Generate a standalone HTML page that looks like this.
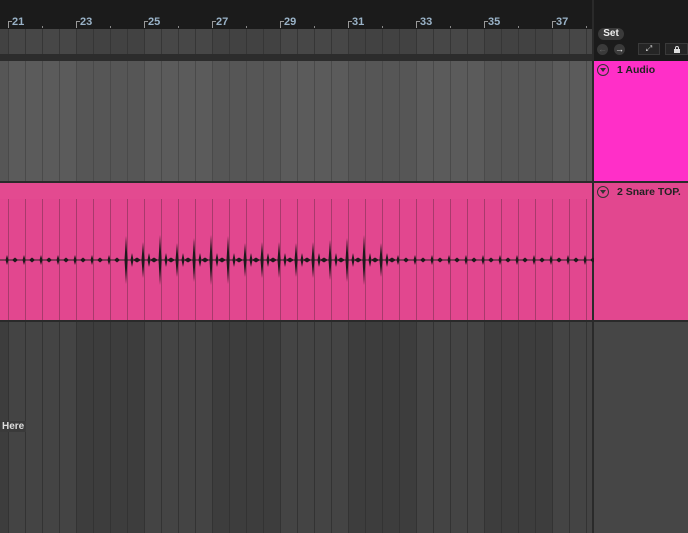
<!DOCTYPE html>
<html><head><meta charset="utf-8"><style>
*{margin:0;padding:0;box-sizing:border-box}
body{width:688px;height:533px;overflow:hidden;background:#1b1b1b;font-family:"Liberation Sans",sans-serif;position:relative}
.abs{position:absolute}
.num{position:absolute;top:16px;font-size:11px;font-weight:bold;color:#9ab3c8}
.tick{position:absolute;top:21px;width:4px;height:7px;border-left:1px solid #999;border-top:1px solid #999}
</style></head><body>
<div class="abs" style="left:0;top:0;width:592px;height:29px;background:#1b1b1b"></div>
<div id="ruler"></div>
<svg class="abs" style="left:0;top:0" width="688" height="533" id="g"></svg>
<div class="abs" style="left:594px;top:61px;width:94px;height:120px;background:#ff2fc8"></div>
<div class="abs" style="left:594px;top:183px;width:94px;height:137px;background:#e2478f"></div>
<div class="abs" style="left:594px;top:322px;width:94px;height:211px;background:#464646"></div>
<div class="abs" style="left:598px;top:28px;width:26px;height:12px;border-radius:6px;background:#3a3a3a;color:#eee;font-size:10px;font-weight:bold;text-align:center;line-height:12px">Set</div>
<div class="abs" style="left:597px;top:44px;width:11px;height:11px;border-radius:6px;background:#3a3a3a;color:#666;font-size:9px;text-align:center;line-height:11px">←</div>
<div class="abs" style="left:614px;top:44px;width:11px;height:11px;border-radius:6px;background:#3a3a3a;color:#eee;font-size:9px;text-align:center;line-height:11px">→</div>
<div class="abs" style="left:638px;top:43px;width:22px;height:12px;background:#252525;border:1px solid #3a3a3a;color:#ddd;font-size:8px;text-align:center;line-height:10px">⤢</div>
<div class="abs" style="left:665px;top:43px;width:23px;height:12px;background:#252525;border:1px solid #3a3a3a"><div style="position:absolute;left:8px;top:5px;width:6px;height:4px;background:#ddd"></div><div style="position:absolute;left:9px;top:2px;width:4px;height:4px;border:1px solid #ddd;border-bottom:none;border-radius:2px 2px 0 0"></div></div>
<div class="abs" style="left:597px;top:64px;width:12px;height:12px;border:1px solid #333;border-radius:50%"><div style="position:absolute;left:2px;top:3px;border-left:3px solid transparent;border-right:3px solid transparent;border-top:4px solid #333"></div></div>
<div class="abs" style="left:617px;top:64px;font-size:10.5px;font-weight:bold;color:#222">1 Audio</div>
<div class="abs" style="left:597px;top:186px;width:12px;height:12px;border:1px solid #333;border-radius:50%"><div style="position:absolute;left:2px;top:3px;border-left:3px solid transparent;border-right:3px solid transparent;border-top:4px solid #333"></div></div>
<div class="abs" style="left:617px;top:186px;font-size:10.5px;font-weight:bold;color:#222">2 Snare TOP.</div>
<div class="abs" style="left:0;top:421px;font-size:10px;font-weight:bold;color:#ddd;background:#3a3a3a;padding:0 2px">Here</div>
<script>
var s='',r='';
var X0=8,B=34;
s+='<rect x="0" y="29" width="592" height="25" fill="#454545"/>';
s+='<rect x="0" y="54" width="592" height="7" fill="#2c2c2c"/>';
for(var b=-1;b<18;b++){var x=X0+b*B*2;var light=((b%2)+2)%2==0;
s+='<rect x="'+x+'" y="29" width="68" height="25" fill="'+(light?'#474747':'#424242')+'"/>';
s+='<rect x="'+x+'" y="61" width="68" height="120" fill="'+(light?'#5b5b5b':'#565656')+'"/>';
s+='<rect x="'+x+'" y="322" width="68" height="211" fill="'+(light?'#444':'#3d3d3d')+'"/>';}
s+='<rect x="0" y="181" width="592" height="2" fill="#2a2a2a"/>';
s+='<rect x="0" y="320" width="592" height="2" fill="#2a2a2a"/>';
s+='<rect x="0" y="183" width="592" height="137" fill="#e2478f"/>';
s+='<rect x="0" y="183" width="592" height="16" fill="#e34a90"/>';
for(var x=X0-17;x<592;x+=17){var xi=Math.round(x)+.5;
s+='<line x1="'+xi+'" y1="29" x2="'+xi+'" y2="54" stroke="#363636"/>';
s+='<line x1="'+xi+'" y1="61" x2="'+xi+'" y2="181" stroke="#4a4a4a"/>';
s+='<line x1="'+xi+'" y1="199" x2="'+xi+'" y2="320" stroke="#a83a6c"/>';
s+='<line x1="'+xi+'" y1="322" x2="'+xi+'" y2="533" stroke="#333"/>';}
s+='<rect x="592" y="0" width="2" height="533" fill="#2a2a2a"/>';
s+='<rect x="594" y="0" width="94" height="61" fill="#1b1b1b"/>';
s+='<rect x="594" y="181" width="94" height="2" fill="#2a2a2a"/><rect x="594" y="320" width="94" height="2" fill="#2a2a2a"/>';
var c=260;s+='<line x1="0" y1="260" x2="592" y2="260" stroke="#222" stroke-width="1"/>';
function sp(x,a,w){s+='<polygon points="'+(x-w)+','+c+' '+x+','+(c-a)+' '+(x+w)+','+c+' '+x+','+(c+a)+'" fill="#1e1a1c"/>';}
for(var x=7;x<592;x+=17){var big=(x>=120&&x<=390);
if(big){var a=[24,18,25,17,22,25,24,17,18,18,17,18,20,22,25,17,24][Math.round((x-127)/17)]||18;sp(x,a,1.5);sp(x+6,7,1.5);sp(x+11,2.5,4);}
else{sp(x,5,1.5);sp(x+8,2.5,3);}}
document.getElementById('g').innerHTML=s;
var labels=[21,23,25,27,29,31,33,35,37];
for(var i=0;i<labels.length;i++){var x=X0+i*68;r+='<div class="tick" style="left:'+x+'px"></div><div class="num" style="left:'+(x+4)+'px">'+labels[i]+'</div>';if(x+34<592)r+='<div class="abs" style="left:'+(x+34)+'px;top:26px;width:1px;height:2px;background:#888"></div>';}
document.getElementById('ruler').innerHTML=r;
</script>
</body></html>
